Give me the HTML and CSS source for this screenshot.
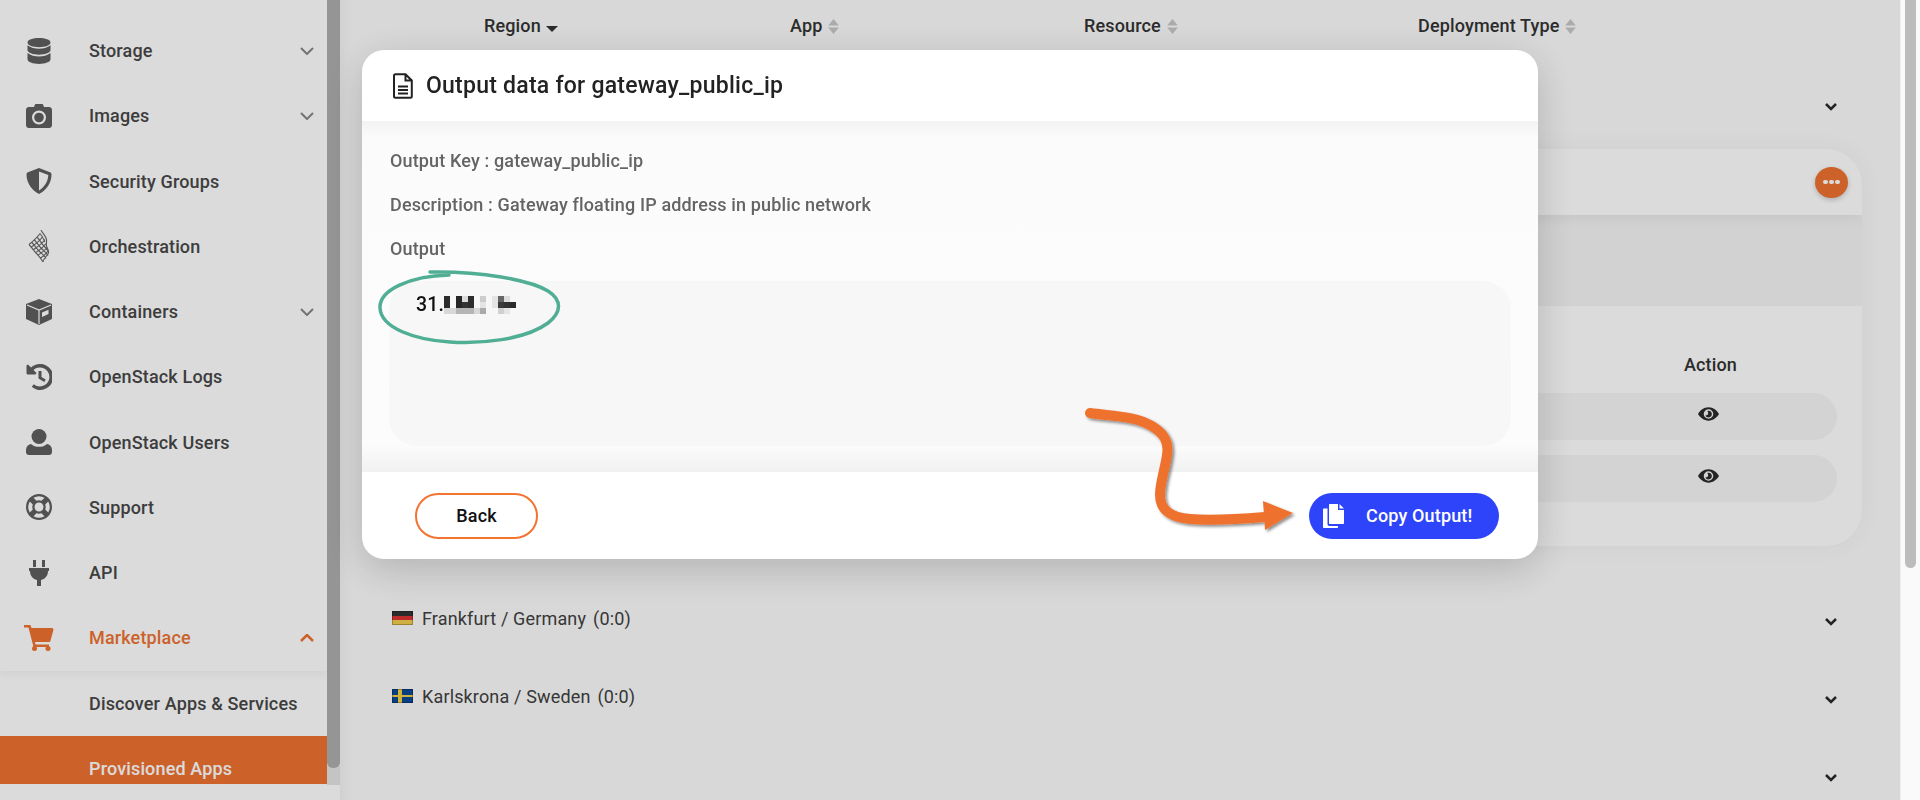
FILE: index.html
```html
<!DOCTYPE html>
<html lang="en">
<head>
<meta charset="utf-8">
<title>Output data</title>
<link rel="stylesheet" href="styles.css">
</head>
<body>
<div class="page">
  <aside class="sidebar">
    <nav class="menu">
      <a class="item"><svg class="ico" viewBox="0 0 26 26"><path d="M13 0C7 0 1.500 1.700 1.500 4.500S7 9.200 13 9.200s11.500-1.900 11.500-4.700S19 0 13 0zM1.500 7.300V12c0 2.700 5.500 4.700 11.500 4.700s11.500-2 11.500-4.700V7.300C21.500 9.700 17 10.800 13 10.800S4.500 9.700 1.500 7.300zM1.500 15v6.300C1.500 24 7 26 13 26s11.500-2 11.500-4.700V15c-3 2.400-7.500 3.500-11.500 3.500S4.500 17.400 1.500 15z"/></svg><span class="label">Storage</span><svg class="chev" viewBox="0 0 14 8"><path d="M1 1l6 6 6-6"/></svg></a>
      <a class="item"><svg class="ico" viewBox="0 0 26 24"><path fill-rule="evenodd" d="M3 3h5l1-2.500C9.300 0 9.700 0 10 0h6c.5 0 .8 0 1 .5L18 3h5c1.700 0 3 1.300 3 3v15c0 1.700-1.300 3-3 3H3c-1.700 0-3-1.300-3-3V6c0-1.700 1.300-3 3-3zm10 3.500a7 7 0 100 14 7 7 0 000-14zm0 2.200a4.800 4.800 0 110 9.600 4.800 4.800 0 010-9.600z"/></svg><span class="label">Images</span><svg class="chev" viewBox="0 0 14 8"><path d="M1 1l6 6 6-6"/></svg></a>
      <a class="item"><svg class="ico" viewBox="0 0 26 26"><path fill-rule="evenodd" d="M13 0l11 4.300c1 .4 1.500 1.200 1.500 2.200C25.500 15 20 22.500 13 26 6 22.500.5 15 .5 6.500c0-1 .5-1.800 1.500-2.200L13 0zm0 3.500v19c5-3 9-8.500 9.300-15.500L13 3.500z"/></svg><span class="label">Security Groups</span></a>
      <a class="item"><svg class="ico heat" viewBox="0 0 20 32"><path d="M12 0c2 4 5 6 5.500 9.500s-1 5 .5 8 2.500 4 1 6.500-4.500 4-5 8M0 14.500c3-2.500 8-6.500 11-11M1.800 17.500c3.500-2.500 9-6.500 12-11M4 20c3.500-2.500 9-6 12-10.500M6.200 23c3.500-2.500 8-5.500 10.800-9.500M8.500 25.500c3.500-2.500 7.500-5 10-8.500M11 28.500c3.500-2.500 6-4.500 8-7.500M0 14.500c3 3 4.500 6 7 8.500s5 5 7 9M2.500 12c3 3 4.500 6 7 8.500s6 5 7.500 8M5 9.500c3 3 4.500 6 7 8.500s5.500 4.500 7 7.500M8 7c3 3 4 6 6.500 8.500s3.500 3.500 4.500 5.500M11 3.500c2.500 3 3.500 5.500 5 8.500"/></svg><span class="label">Orchestration</span></a>
      <a class="item"><svg class="ico" viewBox="0 0 26 26"><path d="M13 0l13 5v15l-13 6-13-6V5z"/><path class="seam" d="M1 6l12 5 12-5M13 11v14"/><path class="face" d="M16 13.500l6.500-2.700V15L16 18z"/></svg><span class="label">Containers</span><svg class="chev" viewBox="0 0 14 8"><path d="M1 1l6 6 6-6"/></svg></a>
      <a class="item"><svg class="ico" viewBox="0 0 26 26"><path d="M14 0A13 13 0 005 3.500L2.500 1C1.800.3.500.8.500 2v7c0 .8.700 1.500 1.500 1.500h7c1.200 0 1.700-1.300 1-2L7.500 6A9.500 9.500 0 1114 22.500c-2.300 0-4.400-.8-6.100-2.200l-2.200 2.500A13 13 0 1014 0zM12.500 7v7.500l5.800 3.500 1.400-2.400-4.200-2.600V7z"/></svg><span class="label">OpenStack Logs</span></a>
      <a class="item"><svg class="ico" viewBox="0 0 26 26"><circle cx="13" cy="7.500" r="7.500"/><path d="M5 15c2 2 5 2.800 8 2.800s6-.8 8-2.800c3 .5 5 3 5 6v2c0 1.700-1.300 3-3 3H3c-1.700 0-3-1.300-3-3v-2c0-3 2-5.500 5-6z"/></svg><span class="label">OpenStack Users</span></a>
      <a class="item"><svg class="ico" viewBox="0 0 26 26"><path fill-rule="evenodd" d="M13 0a13 13 0 110 26 13 13 0 010-26zM7.500 3.800l3 3a7 7 0 015 0l3-3a11 11 0 00-11 0zM3.800 7.500a11 11 0 000 11l3-3a7 7 0 010-5l-3-3zm18.400 0l-3 3a7 7 0 010 5l3 3a11 11 0 000-11zM10.500 19.200l-3 3a11 11 0 0011 0l-3-3a7 7 0 01-5 0zM13 8.500a4.500 4.500 0 100 9 4.500 4.500 0 000-9z"/></svg><span class="label">Support</span></a>
      <a class="item"><svg class="ico" viewBox="0 0 26 26"><path d="M7 0h3v7H7zM16 0h3v7h-3zM3 8h20v3h-1c0 5-3 8-7 9v6h-4v-6c-4-1-7-4-7-9H3z"/></svg><span class="label">API</span></a>
      <a class="item active-parent"><svg class="ico cart" viewBox="0 0 30 26"><path d="M0 0h5.500c.7 0 1.200.4 1.400 1L7.500 3H28c1 0 1.700 1 1.400 2l-3 11c-.2.600-.8 1-1.400 1H11l.5 2.500H25V22H9.500L4.500 2.500H0z"/><circle cx="10.500" cy="23.500" r="2.500"/><circle cx="24" cy="23.500" r="2.500"/></svg><span class="label">Marketplace</span><svg class="chev up" viewBox="0 0 14 8"><path d="M1 7l6-6 6 6"/></svg></a>
      <a class="item sub"><span class="label">Discover Apps &amp; Services</span></a>
      <a class="item sub current"><span class="label">Provisioned Apps</span></a>
    </nav>
    <div class="side-track"><div class="side-thumb"></div></div>
  </aside>

  <main class="content">
    <div class="head">
      <span class="col c-region">Region <svg class="sort" viewBox="0 0 10 5"><path class="dark" d="M0 0h10L5 5z"/></svg></span>
      <span class="col c-app">App <svg class="sort2" viewBox="0 0 10 14"><path d="M5 0l5 6H0zM0 8h10l-5 6z"/></svg></span>
      <span class="col c-res">Resource <svg class="sort2" viewBox="0 0 10 14"><path d="M5 0l5 6H0zM0 8h10l-5 6z"/></svg></span>
      <span class="col c-dep">Deployment Type <svg class="sort2" viewBox="0 0 10 14"><path d="M5 0l5 6H0zM0 8h10l-5 6z"/></svg></span>
    </div>
    <div class="region first">
      <svg class="down" viewBox="0 0 12 8"><path d="M1 1l5 5 5-5"/></svg>
    </div>
    <section class="card">
      <div class="card-top">
        <button class="more"><i></i><i></i><i></i></button>
      </div>
      <div class="card-band"></div>
      <div class="card-body">
        <div class="action-title">Action</div>
        <div class="rowpill"><svg class="eye" viewBox="0 0 22 14"><path fill-rule="evenodd" d="M11 0c5 0 9 3.500 11 7-2 3.500-6 7-11 7S2 10.500 0 7c2-3.500 6-7 11-7zm0 2a5 5 0 100 10 5 5 0 000-10zm0 1.500a3.500 3.500 0 11-3.300 4.700c1.400.6 3-.5 3-2 0-1-.4-1.800-1-2.300.4-.3.800-.4 1.300-.4z"/></svg></div>
        <div class="rowpill"><svg class="eye" viewBox="0 0 22 14"><path fill-rule="evenodd" d="M11 0c5 0 9 3.500 11 7-2 3.500-6 7-11 7S2 10.500 0 7c2-3.500 6-7 11-7zm0 2a5 5 0 100 10 5 5 0 000-10zm0 1.500a3.500 3.500 0 11-3.300 4.700c1.400.6 3-.5 3-2 0-1-.4-1.800-1-2.300.4-.3.800-.4 1.300-.4z"/></svg></div>
      </div>
    </section>
    <div class="region">
      <span class="flag de"></span><span class="rname">Frankfurt / Germany</span><span class="rcount">(0:0)</span>
      <svg class="down" viewBox="0 0 12 8"><path d="M1 1l5 5 5-5"/></svg>
    </div>
    <div class="region">
      <span class="flag se"></span><span class="rname">Karlskrona / Sweden</span><span class="rcount">(0:0)</span>
      <svg class="down" viewBox="0 0 12 8"><path d="M1 1l5 5 5-5"/></svg>
    </div>
    <div class="region">
      <svg class="down" viewBox="0 0 12 8"><path d="M1 1l5 5 5-5"/></svg>
    </div>
  </main>
  <div class="page-track"><div class="page-thumb"></div></div>
</div>

<div class="overlay"></div>

<div class="modal">
  <header class="m-head">
    <svg class="doc" viewBox="0 0 20 26"><path d="M2.500 1.200h10l6.300 6.300v15.800c0 .8-.7 1.500-1.500 1.500H2.500c-.8 0-1.500-.7-1.500-1.500V2.700c0-.8.700-1.500 1.500-1.500zM12.500 1.200v6.300h6.300M5 13.500h10M5 17h10M5 20.500h10"/></svg>
    <h2>Output data for gateway_public_ip</h2>
  </header>
  <div class="m-body">
    <p class="m-line">Output Key : gateway_public_ip</p>
    <p class="m-line">Description : Gateway floating IP address in public network</p>
    <p class="m-line">Output</p>
    <div class="m-output">
      <span class="ip">31.</span>
      <svg class="blur" viewBox="0 0 72 18" shape-rendering="crispEdges">
        <rect x="0" y="0" width="6" height="12" fill="#2c2c2c"/><rect x="0" y="12" width="6" height="6" fill="#d8d8d8"/>
        <rect x="6" y="12" width="6" height="6" fill="#d8d8d8"/>
        <rect x="12" y="0" width="6" height="12" fill="#262626"/><rect x="12" y="12" width="6" height="6" fill="#b5b5b5"/>
        <rect x="18" y="0" width="6" height="6" fill="#dcdcdc"/><rect x="18" y="6" width="6" height="6" fill="#333"/><rect x="18" y="12" width="6" height="6" fill="#b5b5b5"/>
        <rect x="24" y="0" width="6" height="12" fill="#2c2c2c"/><rect x="24" y="12" width="6" height="6" fill="#b5b5b5"/>
        <rect x="30" y="12" width="6" height="6" fill="#d8d8d8"/>
        <rect x="36" y="0" width="6" height="6" fill="#ccc"/><rect x="36" y="6" width="6" height="6" fill="#e4e4e4"/><rect x="36" y="12" width="6" height="6" fill="#aaa"/>
        <rect x="48" y="0" width="6" height="12" fill="#e4e4e4"/>
        <rect x="54" y="0" width="6" height="6" fill="#666"/><rect x="54" y="6" width="6" height="6" fill="#3a3a3a"/><rect x="54" y="12" width="6" height="6" fill="#d0d0d0"/>
        <rect x="60" y="0" width="6" height="6" fill="#ddd"/><rect x="60" y="6" width="6" height="6" fill="#333"/><rect x="60" y="12" width="6" height="6" fill="#e6e6e6"/>
        <rect x="66" y="6" width="6" height="6" fill="#2c2c2c"/>
      </svg>
    </div>
  </div>
  <footer class="m-foot">
    <button class="btn-back">Back</button>
    <button class="btn-copy"><svg class="copy" viewBox="0 0 22 24"><path d="M7 0h8v6h6v13c0 .6-.4 1-1 1H7c-.6 0-1-.4-1-1V1c0-.6.400-1 1-1zM16.500 0L21 4.500h-4.500zM0 5.500c0-.6.400-1 1-1h3.500V20c0 1 .7 2 2 2H15v1c0 .6-.4 1-1 1H1c-.6 0-1-.4-1-1z"/></svg><span>Copy Output!</span></button>
  </footer>
</div>

<svg class="marks" viewBox="0 0 1920 800">
  <defs>
    <filter id="sh" x="-10%" y="-10%" width="125%" height="125%"><feDropShadow dx="2" dy="2" stdDeviation="1.500" flood-color="#000" flood-opacity=".45"/></filter>
  </defs>
  <path class="ring" d="M430 272C480 271 530 280 548 291 562 300 562 312 548 323 525 340 480 344 450 342 415 340 381 328 380 308 379 290 410 276 449 275"/>
  <g filter="url(#sh)">
    <path class="flow" d="M1090 413C1110 416 1135 416 1150 425 1165 433 1169 443 1167 455 1165 470 1160 482 1160 495 1160 510 1170 517 1190 519 1215 521 1240 519 1265 517"/>
    <path class="head-arrow" d="M1263 501l30 12-28 17z"/>
  </g>
</svg>
</body>
</html>
```
FILE: styles.css
```css
* { box-sizing: border-box; }
html, body { margin: 0; height: 800px; overflow: hidden; }
body { font-family: Roboto, "Liberation Sans", sans-serif; color: #333; background: #fff; letter-spacing: .15px; }
.page { display: flex; height: 800px; background: #fff; }

/* Sidebar */
.sidebar { width: 340px; flex: none; display: flex; height: 800px; background: #fff; }
.menu { width: 327px; flex: none; padding-top: 18px; height: 785px; background: #fff; display: flex; flex-direction: column; }
.item { height: 65.250px; flex: none; display: flex; align-items: center; font-size: 18px; font-weight: 500; color: #404040; position: relative; padding-left: 26px; }
.ico { width: 26px; height: 26px; fill: #5f5f5f; flex: none; }
.seam { fill: none; stroke: #fff; stroke-width: 1.200; }
.face { fill: #fff; }
.label { margin-left: 37px; white-space: nowrap; color: #484848; }
.heat { fill: none; stroke: #666; stroke-width: 1.100; height: 32px; }
.chev { width: 14px; height: 8px; margin-left: auto; margin-right: 13px; fill: none; stroke: #888; stroke-width: 2; flex: none; }
.active-parent { box-shadow: 0 3px 8px rgba(0,0,0,.05); clip-path: inset(0 0 -14px 0); }
.active-parent .label { color: #ee7232; }
.active-parent .cart { fill: #ee7232; width: 30px; margin-left: -2px; margin-right: -2px; }
.active-parent .chev { stroke: #ee7232; stroke-width: 2.500; }
.sub { padding-left: 89px; }
.sub .label { margin-left: 0; }
.current { background: #ee7232; height: 48px; padding-top: 17px; }
.current .label { color: #fff; }
.side-track { width: 13px; height: 785px; flex: none; background: #e5e5e5; }
.side-thumb { width: 13px; height: 768px; background: #aeaeae; border-radius: 0 0 6px 6px; }

/* Content */
.content { flex: 1; min-width: 0; padding: 0 0 0 52px; background: #fcfcfc; box-shadow: inset 16px 0 14px -14px rgba(0,0,0,.06); }
.head { height: 50px; position: relative; font-size: 18px; font-weight: 500; color: #333; }
.col { position: absolute; top: 15px; white-space: nowrap; }
.c-region { left: 92px; }
.c-app { left: 398px; }
.c-res { left: 692px; }
.c-dep { left: 1026px; }
.sort { width: 12px; height: 6px; margin-left: 0; vertical-align: 0; }
.sort .dark { fill: #333; }
.sort2 { width: 11px; height: 15px; fill: #c8c8c8; margin-left: 1px; vertical-align: -2px; }
.region { display: flex; align-items: center; font-size: 18px; color: #404040; height: 78px; }
.down { width: 12px; height: 8px; margin-left: auto; margin-right: 63px; margin-top: 8px; fill: none; stroke: #2a2a2a; stroke-width: 2.500; flex: none; }
.first { height: 99px; padding-top: 6px; }
.card { height: 397px; width: 1470px; border-radius: 36px; background: #fff; box-shadow: 0 0 24px rgba(0,0,0,.05); display: flex; flex-direction: column; overflow: hidden; margin-bottom: 33px; }
.card-top { height: 66px; background: #fff; box-shadow: 0 4px 12px rgba(0,0,0,.06); display: flex; align-items: center; justify-content: flex-end; padding-right: 14px; position: relative; flex: none; }
.more { width: 33px; height: 31px; border: 0; padding: 0; border-radius: 50%; background: #ee7232; display: flex; gap: 1.500px; align-items: center; justify-content: center; box-shadow: 0 2px 5px rgba(0,0,0,.2); }
.more i { width: 4.500px; height: 4.500px; background: #fff; border-radius: 50%; }
.card-band { height: 91px; background: #f5f5f5; flex: none; }
.card-body { flex: 1; padding: 48px 25px 0 0; display: flex; flex-direction: column; }
.action-title { font-size: 18px; font-weight: 500; line-height: 22px; text-align: right; padding-right: 100px; height: 39px; color: #333; }
.rowpill { height: 47px; background: #f6f6f6; border-radius: 24px; margin-bottom: 15px; display: flex; align-items: center; justify-content: flex-end; padding-right: 118px; flex: none; margin-left: 400px; padding-bottom: 6px; }
.eye { width: 21px; height: 14px; fill: #2b2b2b; }
.flag { width: 21px; height: 14px; flex: none; margin-right: 9px; box-shadow: inset 0 0 0 1px rgba(0,0,0,.25); }
.de { background: linear-gradient(#333 0 33%, #d33 33% 66%, #f2cc4d 66%); }
.se { background: linear-gradient(90deg, transparent 29%, #f4cf42 29% 48%, transparent 48%), linear-gradient(#0b4a96 0 40%, #f4cf42 40% 60%, #0b4a96 60%); }
.rname { margin-right: 7px; }
.page-track { width: 20px; flex: none; background: #fafafa; border-left: 1px solid #eee; padding-left: 4px; position: relative; z-index: 2; }
.page-thumb { width: 11px; height: 568px; background: #bcbcbc; border-radius: 0 0 6px 6px; }

/* Overlay */
.overlay { position: fixed; inset: 0; background: rgba(0,0,0,.14); z-index: 1; }

/* Modal */
.modal { position: fixed; left: 362px; top: 50px; width: 1176px; height: 509px; border-radius: 22px; background: #fff; box-shadow: 0 10px 40px rgba(0,0,0,.18); display: flex; flex-direction: column; overflow: hidden; z-index: 3; }
.m-head { height: 71px; flex: none; display: flex; align-items: center; padding-left: 31px; gap: 13px; }
.doc { width: 20px; height: 26px; fill: none; stroke: #222; stroke-width: 2; }
h2 { margin: 0; font-size: 23px; font-weight: 500; color: #222; letter-spacing: .24px; }
.m-body { height: 351px; flex: none; padding: 29px 27px 0; background: linear-gradient(#f3f3f3, #fbfbfb 16px, #fcfcfc calc(100% - 28px), #f1f1f1); }
.m-line { margin: 0 0 22px; padding-left: 1px; font-size: 18px; line-height: 22px; font-weight: 500; color: #646464; letter-spacing: .14px; }
.m-output { height: 165px; margin-top: -1px; background: #f7f7f7; border-radius: 28px; padding: 12px 27px; display: flex; align-items: flex-start; }
.ip { font-size: 19.500px; font-weight: 500; color: #111; line-height: 24px; }
.blur { width: 72px; height: 18px; flex: none; margin-top: 3px; }
.m-foot { flex: 1; display: flex; align-items: center; justify-content: space-between; padding: 0 39px 0 53px; }
.btn-back { width: 123px; height: 46px; border: 2px solid #f37331; border-radius: 23px; background: #fff; font: 500 18px Roboto, sans-serif; letter-spacing: inherit; color: #111; }
.btn-copy { width: 190px; height: 46px; border: 0; border-radius: 23px; background: #2e44fa; color: #fff; font: 500 18px Roboto, sans-serif; letter-spacing: inherit; display: flex; align-items: center; padding-left: 14px; }
.copy { width: 22px; height: 24px; fill: #fff; margin-right: 21px; }

/* Annotations */
.marks { position: fixed; inset: 0; width: 1920px; height: 800px; pointer-events: none; z-index: 4; }
.ring { fill: none; stroke: #4fae94; stroke-width: 3.500; stroke-linecap: round; }
.flow { fill: none; stroke: #ee722f; stroke-width: 10; stroke-linecap: round; }
.head-arrow { fill: #ee722f; }
```
